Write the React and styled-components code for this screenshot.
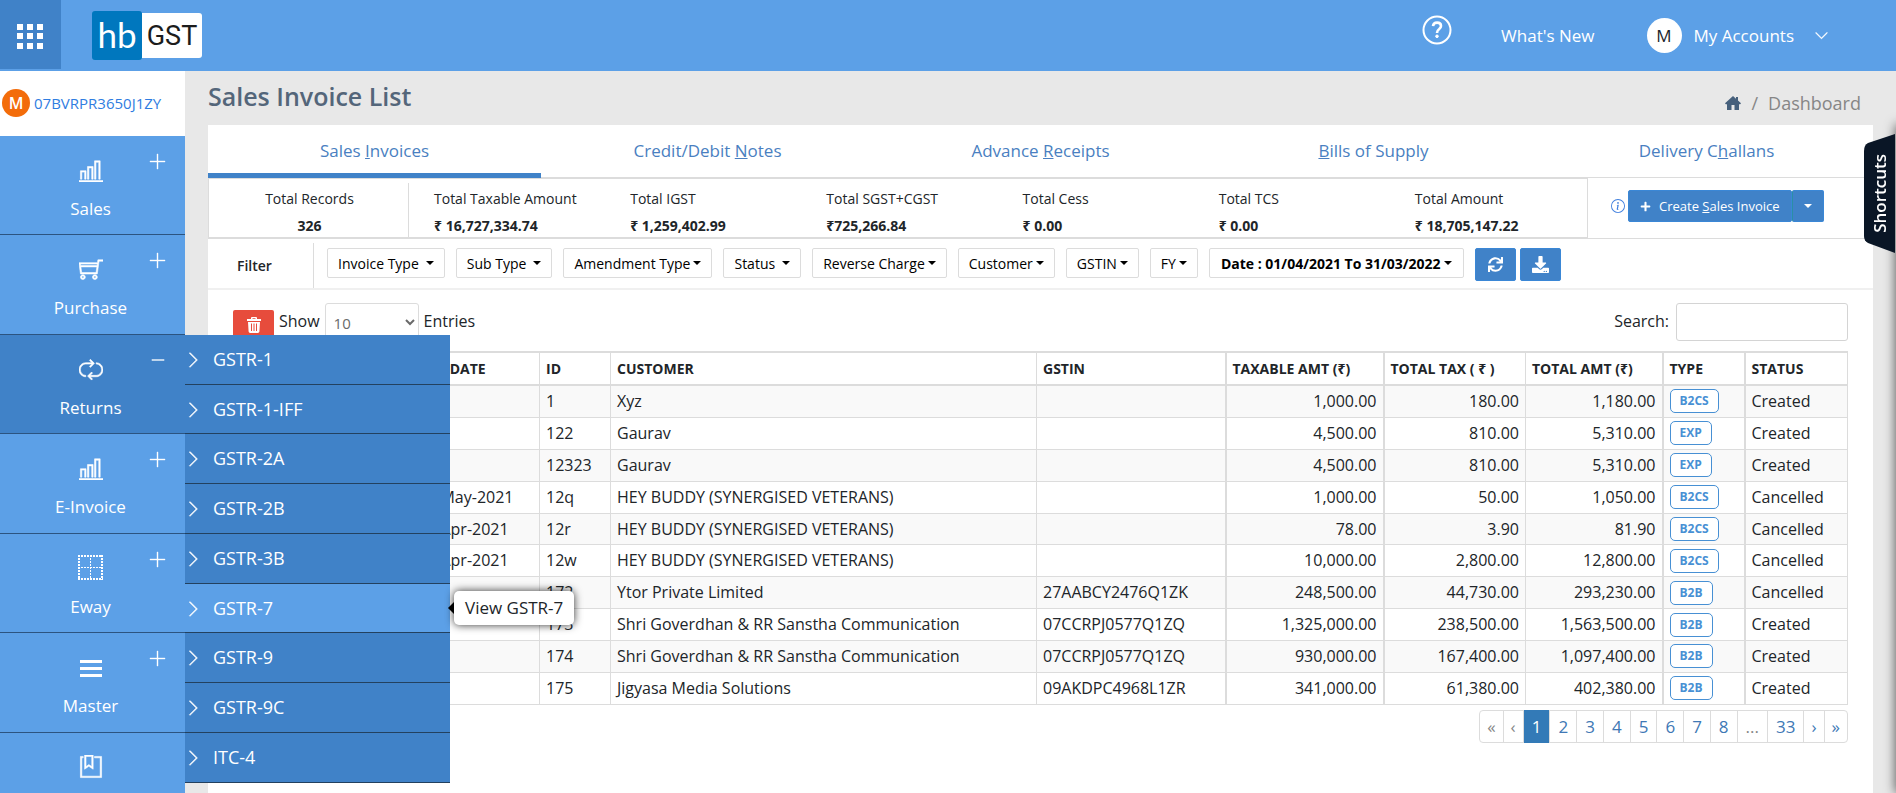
import React, { useState } from 'react';
import styled, { createGlobalStyle, css } from 'styled-components';
import { BsInfoCircle } from 'react-icons/bs';
import { FaDownload, FaPlus, FaSync } from 'react-icons/fa';
import {
  TfiAngleDown,
  TfiAngleRight,
  TfiBarChart,
  TfiBookmarkAlt,
  TfiLoop,
  TfiMinus,
  TfiPlus,
  TfiShoppingCart,
} from 'react-icons/tfi';

const GlobalStyle = createGlobalStyle`
  * {
    box-sizing: border-box;
  }

  body {
    margin: 0;
    background: #e8e8e8;
    color: #212529;
    font-family: 'Open Sans', 'Noto Sans', sans-serif;
    font-size: 16px;
    overflow: hidden;
  }

  a {
    text-decoration: none;
  }

  button,
  input,
  select {
    font-family: inherit;
  }
`;

const Page = styled.div`
  display: flex;
  flex-direction: column;
  height: 100vh;
`;

const TopBar = styled.header`
  display: flex;
  align-items: center;
  flex-shrink: 0;
  height: 71px;
  padding-right: 68px;
  background: #5ca0e7;
  color: white;
  font-size: 17px;
`;

const AppsButton = styled.button`
  display: flex;
  align-items: center;
  justify-content: center;
  align-self: flex-start;
  width: 61px;
  height: 69px;
  padding: 4px 2px 0 0;
  border: none;
  background: #4082c8;
`;

const Logo = styled.a`
  display: flex;
  align-items: center;
  margin: 0 auto 0 31px;
  line-height: 1;
`;

const LogoMark = styled.span`
  width: 50px;
  height: 49px;
  border-radius: 3px;
  background: #0077be;
  color: white;
  font-family: Lato, sans-serif;
  font-size: 35px;
  line-height: 46px;
  text-align: center;
`;

const LogoName = styled.span`
  width: 60px;
  height: 45px;
  border-radius: 0 3px 3px 0;
  background: white;
  color: #1c1c1c;
  font-family: Roboto, sans-serif;
  font-size: 27px;
  line-height: 46px;
  text-align: center;
`;

const HelpLink = styled.a`
  align-self: flex-start;
  margin: 15px 49px 0 0;
  height: 30px;
`;

const TopLink = styled.a`
  margin-right: 52px;
  color: white;
`;

const AccountButton = styled.button`
  display: flex;
  align-items: center;
  gap: 12px;
  padding: 0;
  border: none;
  background: none;
  color: white;
  font-size: 17px;

  svg {
    margin-left: 9px;
  }
`;

const Avatar = styled.span`
  width: 35px;
  height: 35px;
  border-radius: 50%;
  background: white;
  color: #212529;
  line-height: 35px;
  text-align: center;
`;

const Body = styled.div`
  display: flex;
  flex: 1;
  min-height: 0;
`;

const Sidebar = styled.aside`
  position: relative;
  flex: 0 0 185px;
  background: #5ca0e7;
`;

const Company = styled.a`
  display: flex;
  align-items: center;
  gap: 4px;
  height: 65px;
  padding: 0 0 2px 2px;
  background: white;
  color: #2f7de1;
  font-size: 15px;
`;

const CompanyBadge = styled.span`
  width: 28px;
  height: 28px;
  border-radius: 50%;
  background: #f36c0a;
  color: white;
  font-size: 16px;
  font-weight: 600;
  line-height: 28px;
  text-align: center;
`;

const MenuClip = styled.nav`
  height: calc(100% - 65px);
  overflow: hidden;
`;

const MenuItem = styled.button`
  display: grid;
  grid-template-columns: 55px 1fr 55px;
  grid-template-rows: 45px auto;
  justify-items: center;
  align-items: end;
  width: 100%;
  padding: 2px 0 13px;
  border: none;
  border-bottom: 1px solid #2c5480;
  background: ${(props) => (props.$open ? '#4082c8' : '#5ca0e7')};
  color: white;
  font-size: 17px;
  line-height: 1.44;
`;

const MenuIcon = styled.span`
  grid-column: 2;
  display: flex;
  padding: 0 4px 1px 0;
`;

const MenuToggle = styled.span`
  display: flex;
  align-self: center;
  padding-top: 2px;
`;

const MenuLabel = styled.span`
  grid-column: 1 / -1;
  padding: 14px 4px 0 0;
`;

const Submenu = styled.ul`
  position: absolute;
  top: 264px;
  left: 100%;
  z-index: 2;
  width: 265px;
  margin: 0;
  padding: 0;
  list-style: none;
  background: #4082c8;
`;

const SubmenuRow = styled.li`
  position: relative;
`;

const SubmenuLink = styled.a`
  display: flex;
  align-items: center;
  gap: 12px;
  padding: 12px 0 11px;
  border-bottom: 1px solid #23415f;
  background: ${(props) => (props.$active ? '#5ca0e7' : '#4082c8')};
  color: white;
  font-size: 18px;
  line-height: 1.43;
`;

const Tooltip = styled.span`
  position: absolute;
  top: 7px;
  left: calc(100% + 4px);
  padding: 0 11px;
  border-radius: 5px;
  background: white;
  box-shadow: 0 0 8px rgba(0, 0, 0, 0.8);
  color: #212529;
  font-size: 17px;
  line-height: 34px;
  white-space: nowrap;

  &::before {
    content: '';
    position: absolute;
    top: 11px;
    right: 100%;
    border: 6px solid transparent;
    border-left: none;
    border-right-color: black;
  }
`;

const Main = styled.main`
  display: flex;
  flex-direction: column;
  flex: 1;
  min-width: 0;
  padding: 0 23px;
`;

const PageHead = styled.div`
  display: flex;
  justify-content: space-between;
  align-items: center;
  height: 54px;
  padding: 0 12px 4px 0;
`;

const Title = styled.h1`
  margin: 0;
  color: #54667a;
  font-size: 25px;
  font-weight: 600;
`;

const Breadcrumb = styled.nav`
  display: flex;
  align-items: center;
  gap: 10px;
  padding-top: 14px;
  color: #868686;
  font-size: 18px;

  a {
    display: flex;
  }
`;

const Card = styled.section`
  flex: 1;
  min-height: 0;
  background: white;
`;

const Tabs = styled.nav`
  display: flex;
  border-bottom: 1px solid #dcdcdc;
`;

const Tab = styled.a`
  flex: 1;
  margin-bottom: -1px;
  padding-top: 4px;
  border-bottom: 5px solid ${(props) => (props.$active ? '#4082c8' : 'transparent')};
  color: #4a7fc1;
  font-size: 17px;
  line-height: 44px;
  text-align: center;
`;

const Summary = styled.div`
  display: flex;
  align-items: stretch;
  height: 61px;
  border-bottom: 1px solid #dcdcdc;
`;

const Totals = styled.dl`
  display: flex;
  flex: 1;
  margin: 0;
  border: 1px solid #dcdcdc;
`;

const Total = styled.div`
  flex: 196 1 0;
  padding: 8px 0 0;
  font-size: 14px;
  line-height: 24px;

  &:last-child {
    flex-grow: 172;
  }

  dd {
    margin: 3px 0 0;
    font-weight: 700;
  }
`;

const RecordCount = styled(Total)`
  flex: 0 0 200px;
  margin: 4px 25px 0 0;
  padding: 4px 0 0 2px;
  border-right: 1px solid #dcdcdc;
  text-align: center;
`;

const CreateArea = styled.div`
  display: flex;
  align-items: center;
  gap: 3px;
  width: 285px;
  padding: 0 0 4px 23px;
  color: #3e7ede;
`;

const PrimaryButton = styled.button`
  display: flex;
  align-items: center;
  justify-content: center;
  gap: 8px;
  height: 32px;
  padding: 0 11px;
  border: 1px solid #3a87d6;
  border-radius: 2px;
  background: #4082c8;
  color: white;
  font-size: 13px;
`;

const CreateGroup = styled.div`
  display: flex;

  button + button {
    border-left-color: #2b8ea6;
  }
`;

const Filters = styled.div`
  display: flex;
  border-bottom: 2px solid #f0f0f0;
`;

const FilterLabel = styled.strong`
  width: 106px;
  margin-top: 4px;
  padding-left: 29px;
  border-right: 1px solid #dcdcdc;
  font-size: 14px;
  font-weight: 600;
  line-height: 45px;
`;

const FilterList = styled.div`
  display: flex;
  align-items: flex-start;
  gap: 11px;
  padding: 9px 13px 6px;
`;

const FilterButton = styled.button`
  display: flex;
  align-items: center;
  gap: ${(props) => (props.$roomy ? 7 : 3)}px;
  height: 30px;
  padding: 0 10px;
  border: 1px solid #dcdcdc;
  border-radius: 2px;
  background: white;
  color: black;
  font-size: 14px;
  ${(props) =>
    props.$strong &&
    css`
      padding: 0 11px;
      font-weight: 700;
    `}
`;

const Caret = styled.i`
  border: 4px solid transparent;
  border-top-color: currentColor;
  border-bottom: none;
`;

const IconButtons = styled.div`
  display: flex;
  gap: 4px;

  button {
    width: 41px;
    height: 33px;
    padding: 0;
  }
`;

const ListArea = styled.div`
  padding: 13px 25px;
`;

const ListTools = styled.div`
  display: flex;
  align-items: flex-start;
  gap: 5px;
  line-height: 36px;
`;

const DeleteButton = styled.button`
  display: flex;
  align-items: center;
  justify-content: center;
  width: 41px;
  height: 30px;
  margin-top: 7px;
  padding: 0;
  border: none;
  border-radius: 2px;
  background: #e74c3c;
`;

const EntriesLabel = styled.label`
  display: flex;
  gap: 5px;
`;

const EntriesSelect = styled.select`
  width: 94px;
  height: 38px;
  padding: 2px 4px 0;
  border: 1px solid #dcdcdc;
  border-radius: 3px;
  background: white;
  color: #6a6a6a;
  font-size: 15px;
`;

const SearchLabel = styled.label`
  display: flex;
  gap: 7px;
  margin-left: auto;
`;

const SearchInput = styled.input`
  width: 172px;
  height: 38px;
  border: 1px solid #d4d4d4;
  border-radius: 3px;
`;

const Table = styled.table`
  width: 100%;
  margin-top: 10px;
  table-layout: fixed;
  border-collapse: collapse;
  white-space: nowrap;
`;

const Cell = styled.td`
  padding: 4px 6px;
  border: 1px solid #dcdcdc;
  line-height: 1.43;
  text-align: ${(props) => (props.$amount ? 'right' : 'left')};
`;

const HeadCell = styled.th`
  padding: 1px 6px 0;
  border: 1px solid #dcdcdc;
  border-width: 2px 1px;
  font-size: 14px;
  font-weight: 700;
  line-height: 30px;
  text-align: left;
`;

const Column = styled.col`
  width: ${(props) => props.$width};
  border-left: ${(props) => (props.$heavy ? '2px solid #dcdcdc' : 'none')};
`;

const Row = styled.tr`
  background: ${(props) => (props.$striped ? '#f9f9f9' : 'white')};
`;

const TypeCell = styled(Cell)`
  padding: 3px 6px;
`;

const TypeBadge = styled.a`
  display: block;
  width: fit-content;
  padding: 0 9px;
  border: 1px solid #4790d4;
  border-radius: 5px;
  background: white;
  color: #4790d4;
  font-size: 12px;
  font-weight: 700;
  line-height: 22px;
`;

const Pager = styled.nav`
  display: flex;
  width: fit-content;
  margin: 5px 0 0 auto;
  border: 1px solid #dcdcdc;
  border-radius: 4px;
`;

const PageLink = styled.a`
  padding: 0 ${(props) => (props.$arrow ? 7 : 8)}px;
  background: ${(props) => (props.$current ? '#337ab7' : 'none')};
  color: ${(props) => (props.$current ? 'white' : props.$muted ? '#868686' : '#4078b5')};
  font-size: 17px;
  line-height: 31px;

  & + & {
    border-left: 1px solid #dcdcdc;
  }

  ${(props) =>
    props.$current &&
    css`
      margin: -1px 0;
      line-height: 33px;
    `}
`;

const SidePanelEdge = styled.aside`
  position: fixed;
  top: 125px;
  right: -10px;
  bottom: 0;
  width: 10px;
  box-shadow: 0 0 12px rgba(0, 0, 0, 0.7);
`;

const ShortcutsButton = styled.button`
  position: fixed;
  top: 134px;
  right: 1px;
  display: flex;
  align-items: center;
  justify-content: center;
  width: 31px;
  height: 119px;
  padding: 0;
  border: none;
  background: none;
  color: white;
  font-size: 17px;
  font-weight: 600;

  svg {
    position: absolute;
    inset: 0;
  }

  span {
    position: relative;
    writing-mode: vertical-rl;
    transform: rotate(180deg);
  }
`;

const menu = [
  { label: 'Sales', icon: <TfiBarChart size={24} strokeWidth={0.4} />, expandable: true },
  { label: 'Purchase', icon: <TfiShoppingCart size={24} strokeWidth={0.4} />, expandable: true },
  { label: 'Returns', icon: <TfiLoop size={24} strokeWidth={0.4} />, expandable: true },
  { label: 'E-Invoice', icon: <TfiBarChart size={24} strokeWidth={0.4} />, expandable: true },
  { label: 'Eway', icon: <GridIcon />, expandable: true },
  { label: 'Master', icon: <BarsIcon />, expandable: true },
  { label: 'Reports', icon: <TfiBookmarkAlt size={24} strokeWidth={0.4} /> },
];

const returnsMenu = [
  'GSTR-1',
  'GSTR-1-IFF',
  'GSTR-2A',
  'GSTR-2B',
  'GSTR-3B',
  'GSTR-7',
  'GSTR-9',
  'GSTR-9C',
  'ITC-4',
];

// Each tab label is split round its access key
const tabs = [
  ['Sales ', 'I', 'nvoices'],
  ['Credit/Debit ', 'N', 'otes'],
  ['Advance ', 'R', 'eceipts'],
  ['', 'B', 'ills of Supply'],
  ['Delivery C', 'h', 'allans'],
];

const totals = [
  ['Total Taxable Amount', '₹ 16,727,334.74'],
  ['Total IGST', '₹ 1,259,402.99'],
  ['Total SGST+CGST', '₹725,266.84'],
  ['Total Cess', '₹ 0.00'],
  ['Total TCS', '₹ 0.00'],
  ['Total Amount', '₹ 18,705,147.22'],
];

const filters = [
  { label: 'Invoice Type', roomy: true },
  { label: 'Sub Type', roomy: true },
  { label: 'Amendment Type' },
  { label: 'Status', roomy: true },
  { label: 'Reverse Charge' },
  { label: 'Customer' },
  { label: 'GSTIN' },
  { label: 'FY' },
  { label: 'Date : 01/04/2021 To 31/03/2022', strong: true },
];

const columns = [
  { label: '', width: '177px' },
  { label: 'INV. DATE', width: '129px' },
  { label: 'ID', width: '71px' },
  { label: 'CUSTOMER', width: 'auto' },
  { label: 'GSTIN', width: '189px' },
  { label: 'TAXABLE AMT (₹)', width: '158px', heavy: true },
  { label: 'TOTAL TAX ( ₹ )', width: '142px', heavy: true },
  { label: 'TOTAL AMT (₹)', width: '137px' },
  { label: 'TYPE', width: '82px', heavy: true },
  { label: 'STATUS', width: '103px', heavy: true },
];

const invoices = [
  { id: '1', customer: 'Xyz', taxable: '1,000.00', tax: '180.00', total: '1,180.00', type: 'B2CS', status: 'Created' },
  { id: '122', customer: 'Gaurav', taxable: '4,500.00', tax: '810.00', total: '5,310.00', type: 'EXP', status: 'Created' },
  { id: '12323', customer: 'Gaurav', taxable: '4,500.00', tax: '810.00', total: '5,310.00', type: 'EXP', status: 'Created' },
  { id: '12q', date: '03-May-2021', customer: 'HEY BUDDY (SYNERGISED VETERANS)', taxable: '1,000.00', tax: '50.00', total: '1,050.00', type: 'B2CS', status: 'Cancelled' },
  { id: '12r', date: '30-Apr-2021', customer: 'HEY BUDDY (SYNERGISED VETERANS)', taxable: '78.00', tax: '3.90', total: '81.90', type: 'B2CS', status: 'Cancelled' },
  { id: '12w', date: '30-Apr-2021', customer: 'HEY BUDDY (SYNERGISED VETERANS)', taxable: '10,000.00', tax: '2,800.00', total: '12,800.00', type: 'B2CS', status: 'Cancelled' },
  { id: '172', customer: 'Ytor Private Limited', gstin: '27AABCY2476Q1ZK', taxable: '248,500.00', tax: '44,730.00', total: '293,230.00', type: 'B2B', status: 'Cancelled' },
  { id: '173', customer: 'Shri Goverdhan & RR Sanstha Communication', gstin: '07CCRPJ0577Q1ZQ', taxable: '1,325,000.00', tax: '238,500.00', total: '1,563,500.00', type: 'B2B', status: 'Created' },
  { id: '174', customer: 'Shri Goverdhan & RR Sanstha Communication', gstin: '07CCRPJ0577Q1ZQ', taxable: '930,000.00', tax: '167,400.00', total: '1,097,400.00', type: 'B2B', status: 'Created' },
  { id: '175', customer: 'Jigyasa Media Solutions', gstin: '09AKDPC4968L1ZR', taxable: '341,000.00', tax: '61,380.00', total: '402,380.00', type: 'B2B', status: 'Created' },
];

const pages = ['«', '‹', '1', '2', '3', '4', '5', '6', '7', '8', '...', '33', '›', '»'];

function AppsIcon() {
  return (
    <svg width="26" height="25" viewBox="0 0 26 25" fill="white" aria-hidden="true">
      {[0, 10, 20].map((x) =>
        [0, 9, 19].map((y) => <rect key={`${x}-${y}`} x={x} y={y} width="6" height="6" />)
      )}
    </svg>
  );
}

function HelpIcon() {
  return (
    <svg width="30" height="30" viewBox="0 0 30 30" fill="none" stroke="white" strokeWidth="2" aria-hidden="true">
      <circle cx="15" cy="15" r="13.5" />
      <path d="M11 11.2c.2-2.3 1.7-3.6 4.1-3.6 2.3 0 3.9 1.3 3.9 3.3 0 1.6-.9 2.4-2 3.3-1.2.9-1.9 1.6-1.9 3.4v.4" strokeWidth="2.6" />
      <circle cx="15" cy="21.3" r="1.3" fill="white" strokeWidth="1" />
    </svg>
  );
}

function HomeIcon() {
  return (
    <svg width="16" height="14" viewBox="0 0 16 14" fill="#46607c" aria-hidden="true">
      <path d="M8 0l3 2.7V1h2v3.5l3 2.8-.8.9H14V14H9.5V9h-3v5H2V8.200H.8L0 7.300z" />
    </svg>
  );
}

function GridIcon() {
  return (
    <svg width="25" height="25" viewBox="0 0 25 25" fill="none" stroke="white" strokeWidth="2" strokeDasharray="2 1" shapeRendering="crispEdges" aria-hidden="true">
      <path d="M0 1h25M0 24h25M1 0v25M24 0v25" />
      <path d="M0 12.5h25M12.5 0v25" strokeWidth="1" />
    </svg>
  );
}

function BarsIcon() {
  return (
    <svg width="22" height="20" viewBox="0 0 22 20" fill="white" aria-hidden="true">
      <path d="M0 1h22v3H0zM0 8h22v3H0zM0 15h22v3H0z" />
    </svg>
  );
}

function TrashIcon() {
  return (
    <svg width="14" height="16" viewBox="0 0 14 16" fill="white" aria-hidden="true">
      <path d="M5 0h4a1 1 0 0 1 1 1v1h4v2H0V2h4V1a1 1 0 0 1 1-1zm.5 1.2V2h3v-.8z" />
      <path fillRule="evenodd" d="M1 5h12l-.6 9.6a1.5 1.5 0 0 1-1.5 1.4H3.1a1.5 1.5 0 0 1-1.5-1.4zM4 6.5v7.5h1V6.5zm2.5 0v7.5h1V6.5zm2.5 0v7.5h1V6.5z" />
    </svg>
  );
}

const App = () => {
  const [openMenu, setOpenMenu] = useState('Returns');
  const [search, setSearch] = useState('');

  return (
    <Page>
      <GlobalStyle />
      <TopBar>
        <AppsButton aria-label="Apps">
          <AppsIcon />
        </AppsButton>
        <Logo href="#home">
          <LogoMark>hb</LogoMark>
          <LogoName>GST</LogoName>
        </Logo>
        <HelpLink href="#help" aria-label="Help">
          <HelpIcon />
        </HelpLink>
        <TopLink href="#new">What's New</TopLink>
        <AccountButton>
          <Avatar>M</Avatar>
          My Accounts
          <TfiAngleDown size={13} strokeWidth={0.6} />
        </AccountButton>
      </TopBar>

      <Body>
        <Sidebar>
          <Company href="#company">
            <CompanyBadge>M</CompanyBadge>
            07BVRPR3650J1ZY
          </Company>
          <MenuClip>
            {menu.map(({ label, icon, expandable }) => (
              <MenuItem
                key={label}
                $open={label === openMenu}
                onClick={() => setOpenMenu(label === openMenu ? '' : label)}
              >
                <MenuIcon>{icon}</MenuIcon>
                {expandable && (
                  <MenuToggle>
                    {label === openMenu ? (
                      <TfiMinus size={16} strokeWidth={0.4} />
                    ) : (
                      <TfiPlus size={17} strokeWidth={0.4} />
                    )}
                  </MenuToggle>
                )}
                <MenuLabel>{label}</MenuLabel>
              </MenuItem>
            ))}
          </MenuClip>
          {openMenu === 'Returns' && (
            <Submenu>
              {returnsMenu.map((name) => (
                <SubmenuRow key={name}>
                  <SubmenuLink href={`#${name}`} $active={name === 'GSTR-7'}>
                    <TfiAngleRight size={16} strokeWidth={0.6} />
                    {name}
                  </SubmenuLink>
                  {name === 'GSTR-7' && <Tooltip role="tooltip">View {name}</Tooltip>}
                </SubmenuRow>
              ))}
            </Submenu>
          )}
        </Sidebar>

        <Main>
          <PageHead>
            <Title>Sales Invoice List</Title>
            <Breadcrumb>
              <a href="#home" aria-label="Home">
                <HomeIcon />
              </a>
              <span>/</span>
              <span>Dashboard</span>
            </Breadcrumb>
          </PageHead>

          <Card>
            <Tabs>
              {tabs.map(([before, accessKey, after], index) => (
                <Tab key={after} href={`#${after}`} $active={index === 0}>
                  {before}
                  <u>{accessKey}</u>
                  {after}
                </Tab>
              ))}
            </Tabs>

            <Summary>
              <Totals>
                <RecordCount>
                  <dt>Total Records</dt>
                  <dd>326</dd>
                </RecordCount>
                {totals.map(([label, value]) => (
                  <Total key={label}>
                    <dt>{label}</dt>
                    <dd>{value}</dd>
                  </Total>
                ))}
              </Totals>
              <CreateArea>
                <BsInfoCircle size={14} />
                <CreateGroup>
                  <PrimaryButton>
                    <FaPlus size={11} />
                    <span>
                      Create <u>S</u>ales Invoice
                    </span>
                  </PrimaryButton>
                  <PrimaryButton aria-label="More create options">
                    <Caret />
                  </PrimaryButton>
                </CreateGroup>
              </CreateArea>
            </Summary>

            <Filters>
              <FilterLabel>Filter</FilterLabel>
              <FilterList>
                {filters.map(({ label, roomy, strong }) => (
                  <FilterButton key={label} $roomy={roomy} $strong={strong}>
                    {label}
                    <Caret />
                  </FilterButton>
                ))}
                <IconButtons>
                  <PrimaryButton aria-label="Refresh">
                    <FaSync size={15} />
                  </PrimaryButton>
                  <PrimaryButton aria-label="Download">
                    <FaDownload size={17} />
                  </PrimaryButton>
                </IconButtons>
              </FilterList>
            </Filters>

            <ListArea>
              <ListTools>
                <DeleteButton aria-label="Delete selected">
                  <TrashIcon />
                </DeleteButton>
                <EntriesLabel>
                  Show
                  <EntriesSelect defaultValue="10">
                    <option>10</option>
                    <option>25</option>
                    <option>50</option>
                  </EntriesSelect>
                  Entries
                </EntriesLabel>
                <SearchLabel>
                  Search:
                  <SearchInput
                    type="text"
                    value={search}
                    onChange={(e) => setSearch(e.target.value)}
                  />
                </SearchLabel>
              </ListTools>

              <Table>
                <colgroup>
                  {columns.map(({ label, width, heavy }) => (
                    <Column key={label} $width={width} $heavy={heavy} />
                  ))}
                </colgroup>
                <thead>
                  <tr>
                    {columns.map(({ label }) => (
                      <HeadCell key={label}>{label}</HeadCell>
                    ))}
                  </tr>
                </thead>
                <tbody>
                  {invoices.map((invoice, index) => (
                    <Row key={invoice.id} $striped={index % 2 === 0}>
                      <Cell />
                      <Cell>{invoice.date}</Cell>
                      <Cell>{invoice.id}</Cell>
                      <Cell>{invoice.customer}</Cell>
                      <Cell>{invoice.gstin}</Cell>
                      <Cell $amount>{invoice.taxable}</Cell>
                      <Cell $amount>{invoice.tax}</Cell>
                      <Cell $amount>{invoice.total}</Cell>
                      <TypeCell>
                        <TypeBadge href={`#${invoice.id}`}>{invoice.type}</TypeBadge>
                      </TypeCell>
                      <Cell>{invoice.status}</Cell>
                    </Row>
                  ))}
                </tbody>
              </Table>

              <Pager aria-label="Pages">
                {pages.map((page, index) => (
                  <PageLink
                    key={page}
                    href={`#page-${page}`}
                    $current={page === '1'}
                    $arrow={index < 2 || index > 11}
                    $muted={index < 2 || page === '...'}
                  >
                    {page}
                  </PageLink>
                ))}
              </Pager>
            </ListArea>
          </Card>
        </Main>
      </Body>

      <SidePanelEdge />
      <ShortcutsButton>
        <svg width="31" height="119" viewBox="0 0 31 119" fill="#0a1626" aria-hidden="true">
          <path d="M31 0v119L4 109q-4-2-4-7V17q0-6 4-8z" />
        </svg>
        <span>Shortcuts</span>
      </ShortcutsButton>
    </Page>
  );
};

export default App;
